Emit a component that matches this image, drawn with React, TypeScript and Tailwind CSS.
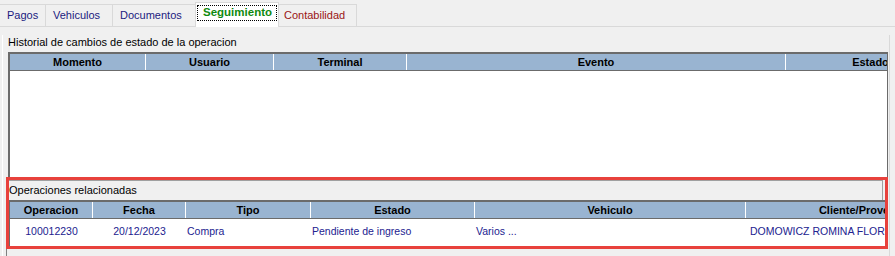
import React from "react";

const upperCols = [
  { label: "Momento", w: "w-[136px]" },
  { label: "Usuario", w: "w-[128px]" },
  { label: "Terminal", w: "w-[133px]" },
  { label: "Evento", w: "w-[379px]" },
  { label: "Estado", w: "w-[170px]" },
];

const lowerCols = [
  { label: "Operacion", w: "w-[83px]", value: "100012230", align: "justify-center" },
  { label: "Fecha", w: "w-[93px]", value: "20/12/2023", align: "justify-center" },
  { label: "Tipo", w: "w-[125px]", value: "Compra", align: "justify-start pl-[1px]" },
  { label: "Estado", w: "w-[164px]", value: "Pendiente de ingreso", align: "justify-start pl-[1px]" },
  { label: "Vehiculo", w: "w-[271px]", value: "Varios ...", align: "justify-start pl-[1px]" },
  { label: "Cliente/Proveedor", w: "w-[241px]", value: "DOMOWICZ ROMINA FLORENCIA", align: "justify-start pl-[4px]" },
];

export default function App() {
  return (
    <div className="w-[895px] h-[256px] bg-[#f0f0f0] overflow-hidden font-['Liberation_Sans',Arial,sans-serif] text-[11px] text-black">
      {/* Tab strip */}
      <div className="h-[27px] flex items-end border-b border-[#d9d9d9]">
        <div className="w-[46px] h-[22px] flex items-center pl-[7px] border-t border-r border-[#d9d9d9] text-[#1b1b80]">
          Pagos
        </div>
        <div className="w-[67px] h-[22px] flex items-center pl-[7px] border-t border-r border-[#d9d9d9] text-[#1b1b80]">
          Vehiculos
        </div>
        <div className="w-[82px] h-[22px] flex items-center pl-[7px] border-t border-[#d9d9d9] text-[#1b1b80]">
          Documentos
        </div>
        <div className="relative z-10 w-[84px] h-[25px] -mb-px bg-white border-t border-l border-r border-[#d9d9d9] pt-[2px] px-px">
          <div className="h-[16px] border border-dotted border-black flex items-center pl-[5px] font-bold text-[11.5px] text-[#0f8a0f] leading-none">
            Seguimiento
          </div>
        </div>
        <div className="w-[78px] h-[22px] flex items-center pl-[5px] border-t border-r border-[#d9d9d9] text-[#9a1515]">
          Contabilidad
        </div>
      </div>

      {/* Panel */}
      <div className="ml-[2px] w-[888px] h-[229px] border-l border-l-white border-r border-r-[#d9d9d9]">
        <div className="mt-[8px] pl-[5px] h-[14px] leading-[14px]">
          Historial de cambios de estado de la operacion
        </div>

        {/* Upper grid */}
        <div className="mt-[3px] ml-[5px] w-[880px] h-[125px] border-t-2 border-l-2 border-r border-[#6b6b6b] bg-white overflow-hidden flex flex-col">
          <div className="h-[17px] shrink-0 flex bg-[#99b4d1] border-b border-[#6b6b6b] overflow-hidden">
            {upperCols.map((c) => (
              <div
                key={c.label}
                className={`${c.w} shrink-0 h-full flex items-center justify-center border-r border-white font-bold leading-none`}
              >
                {c.label}
              </div>
            ))}
          </div>
          <div className="flex-1 bg-white" />
        </div>

        {/* Highlighted related operations */}
        <div className="ml-[3px] w-[882px] h-[72px] border-[3px] border-[#e8413c] flex flex-col overflow-hidden">
          <div className="h-[20px] shrink-0 w-[874px] border-t border-r border-[#a0a0a0] flex items-center leading-none whitespace-nowrap">
            Operaciones relacionadas
          </div>
          <div className="flex-1 border-t-2 border-l border-[#6b6b6b] bg-white overflow-hidden flex flex-col">
            <div className="h-[17px] shrink-0 flex bg-[#99b4d1] border-b border-[#6b6b6b] overflow-hidden">
              {lowerCols.map((c) => (
                <div
                  key={c.label}
                  className={`${c.w} shrink-0 h-full flex items-center justify-center border-r border-white font-bold leading-none whitespace-nowrap`}
                >
                  {c.label}
                </div>
              ))}
            </div>
            <div className="h-[24px] shrink-0 flex overflow-hidden text-[10.5px] text-[#22228f]">
              {lowerCols.map((c) => (
                <div
                  key={c.label}
                  className={`${c.w} shrink-0 h-full flex items-center ${c.align} leading-none whitespace-nowrap overflow-hidden`}
                >
                  {c.value}
                </div>
              ))}
            </div>
          </div>
        </div>
        <div className="ml-[3px] h-[7px] border-l border-[#808080]" />
      </div>
    </div>
  );
}
